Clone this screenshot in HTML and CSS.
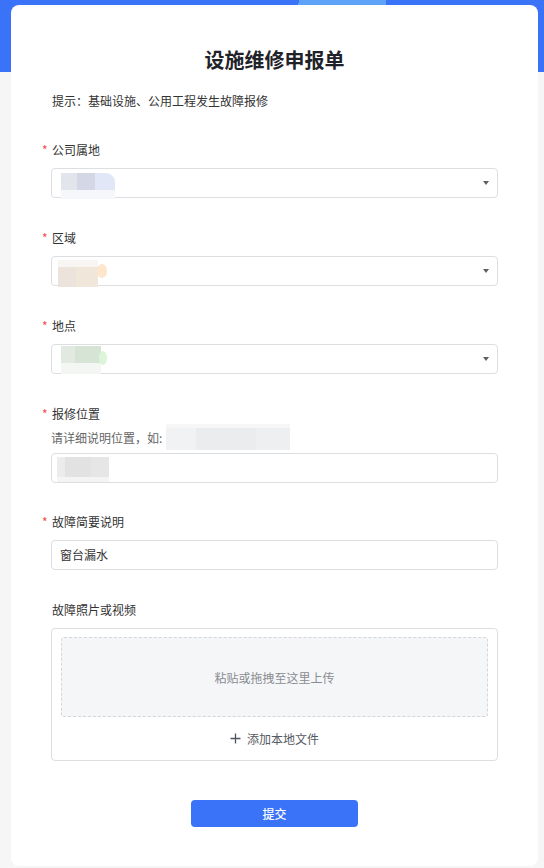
FILE: index.html
```html
<!DOCTYPE html>
<html lang="zh-CN">
<head>
<meta charset="utf-8">
<title>设施维修申报单</title>
<link rel="stylesheet" href="styles.css">
</head>
<body>
<main class="card">
  <h1 class="title">设施维修申报单</h1>
  <p class="hint">提示：基础设施、公用工程发生故障报修</p>

  <div class="field">
    <div class="label"><span class="req">*</span>公司属地</div>
    <div class="control select">
      <span class="blob blob-1"></span>
      <span class="arrow"></span>
    </div>
  </div>

  <div class="field">
    <div class="label"><span class="req">*</span>区域</div>
    <div class="control select">
      <span class="blob blob-2"></span>
      <span class="dot dot-2"></span>
      <span class="arrow"></span>
    </div>
  </div>

  <div class="field">
    <div class="label"><span class="req">*</span>地点</div>
    <div class="control select">
      <span class="blob blob-3"></span>
      <span class="dot dot-3"></span>
      <span class="arrow"></span>
    </div>
  </div>

  <div class="field field-loc">
    <div class="label"><span class="req">*</span>报修位置</div>
    <div class="help">请详细说明位置，如:<span class="blob-inline"></span></div>
    <div class="control input">
      <span class="blob blob-5"></span>
    </div>
  </div>

  <div class="field field-desc">
    <div class="label"><span class="req">*</span>故障简要说明</div>
    <div class="control input"><span class="value">窗台漏水</span></div>
  </div>

  <div class="field field-upload">
    <div class="label">故障照片或视频</div>
    <div class="upload">
      <div class="dropzone">粘贴或拖拽至这里上传</div>
      <div class="add">
        <svg class="plus" width="11" height="11" viewBox="0 0 11 11"><path d="M5.5 0.5v10M0.5 5.5h10" stroke="#4e5562" stroke-width="1.3" fill="none"/></svg>
        <span>添加本地文件</span>
      </div>
    </div>
  </div>

  <div class="actions">
    <button class="submit" type="button">提交</button>
  </div>
</main>
</body>
</html>
```

FILE: styles.css
```css
* { box-sizing: border-box; }

html, body { margin: 0; padding: 0; }

body {
  width: 544px;
  min-height: 868px;
  font-family: "Noto Sans CJK SC", "Noto Sans", sans-serif;
  color: #333;
  background:
    linear-gradient(100deg, transparent 0 3px, #5ea3f7 3px) 296px 0 / 90px 6px no-repeat,
    linear-gradient(#3a72f8 0 72px, #f6f6f7 72px 100%);
  padding: 5px 6px 2px 11px;
}

.card {
  width: 527px;
  background: #fff;
  border-radius: 8px;
  padding: 41px 40px 39px;
}

.title {
  margin: 0;
  font-size: 20px;
  line-height: 28px;
  font-weight: 700;
  text-align: center;
  color: #1f2329;
}

.hint {
  margin: 17px 0 0 1px;
  font-size: 12px;
  line-height: 20px;
  color: #333;
}

.field {
  margin-top: 29px;
}
.field + .field { margin-top: 30px; }
.field + .field-desc { margin-top: 29px; }

.label {
  font-size: 12px;
  line-height: 20px;
  color: #333;
  margin-left: -10px;
  padding-left: 1px;
  display: flex;
  align-items: center;
}
.req {
  width: 10px;
  color: #f54a45;
  font-size: 12px;
  line-height: 20px;
  text-align: left;
  padding-left: 0;
}
.field-upload .label { margin-left: 0; }

.control {
  position: relative;
  margin-top: 8px;
  height: 30px;
  border: 1px solid #dcdee2;
  border-radius: 4px;
  background: #fff;
  display: flex;
  align-items: center;
  padding: 0 8px;
}

.arrow {
  margin-left: auto;
  width: 0;
  height: 0;
  border-left: 3px solid transparent;
  border-right: 3px solid transparent;
  border-top: 4px solid #5c6168;
}

.value {
  font-size: 12px;
  color: #333;
  line-height: 20px;
}

/* censorship mosaics laid over the field content */
.blob { position: absolute; }
.blob-1 {
  left: 9px; top: 4px; width: 54px; height: 26px;
  background:
    linear-gradient(to right, #e3e5ed 0 16px, #d4d8e6 16px 34px, #e1e7f7 34px) top / 100% 17px no-repeat,
    #f6f7fa;
  border-radius: 0 9px 0 0;
}
.blob-2 {
  left: 6px; top: 3px; width: 40px; height: 27px;
  background:
    linear-gradient(to right, #ece4dc 0 18px, #f0e6da 18px) 0 7px / 100% 20px no-repeat,
    #f8f5f2;
}
.dot { position: absolute; border-radius: 50%; }
.dot-2 { left: 45px; top: 7px; width: 10px; height: 14px; background: #fde6cc; }
.blob-3 {
  left: 9px; top: 1px; width: 40px; height: 28px;
  background:
    linear-gradient(to right, #e1e9e0 0 14px, #d5e4d4 14px) top / 100% 17px no-repeat,
    #f3f6f2;
}
.dot-3 { left: 47px; top: 6px; width: 8px; height: 14px; background: #dcf5d8; }
.blob-5 {
  left: 5px; top: 3px; width: 52px; height: 25px;
  background:
    linear-gradient(to right, #ececec 0 8px, #e2e2e2 8px 34px, #e6e6e6 34px) top / 100% 20px no-repeat,
    #f4f4f4;
}

.help {
  margin-top: 4px;
  height: 20px;
  font-size: 12px;
  line-height: 20px;
  color: #666;
  display: flex;
  align-items: center;
}
.blob-inline {
  display: block;
  flex: none;
  width: 124px;
  height: 26px;
  margin: -4px 0 -2px 4px;
  background:
    linear-gradient(to right, #f1f2f3 0 30px, #ebecee 30px 90px, #eeeff0 90px) 0 4px / 100% 22px no-repeat,
    #f7f7f8;
}
.field-loc .control { margin-top: 5px; }

.upload {
  margin-top: 8px;
  border: 1px solid #dcdee2;
  border-radius: 4px;
  padding: 8px 9px 0;
}
.dropzone {
  height: 80px;
  border: 1px dashed #d4d6da;
  border-radius: 3px;
  background: #f5f6f8;
  display: flex;
  align-items: center;
  justify-content: center;
  font-size: 12px;
  color: #888c92;
}
.add {
  height: 43px;
  display: flex;
  align-items: center;
  justify-content: center;
  gap: 6px;
  font-size: 12px;
  color: #555a61;
}
.plus { display: block; }

.actions {
  margin-top: 39px;
  display: flex;
  justify-content: center;
}
.submit {
  width: 167px;
  height: 27px;
  border: 0;
  border-radius: 4px;
  background: #3a72f8;
  color: #fff;
  font-family: "Noto Sans CJK SC", "Noto Sans", sans-serif;
  font-size: 12px;
  font-weight: 500;
  line-height: 27px;
  padding: 0;
}
```
